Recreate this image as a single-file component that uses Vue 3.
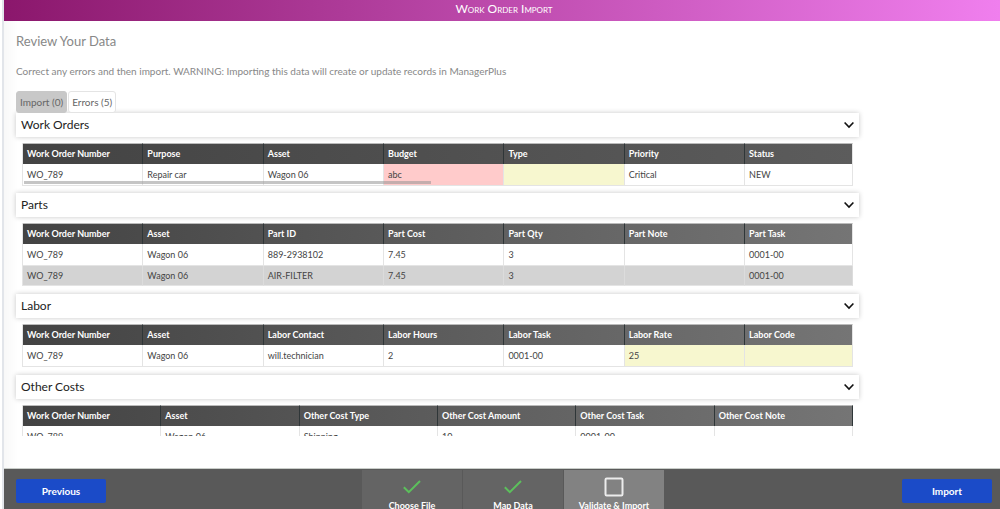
<script setup>
import { ref } from 'vue'

const activeTab = ref('import')

const sections = ref([
  {
    title: 'Work Orders',
    tone: 'dark',
    scrolls: true,
    open: true,
    columns: ['Work Order Number', 'Purpose', 'Asset', 'Budget', 'Type', 'Priority', 'Status'],
    rows: [['WO_789', 'Repair car', 'Wagon 06', 'abc', '', 'Critical', 'NEW']],
    flags: { '0-3': 'error', '0-4': 'warning' },
  },
  {
    title: 'Parts',
    tone: 'light',
    open: true,
    columns: ['Work Order Number', 'Asset', 'Part ID', 'Part Cost', 'Part Qty', 'Part Note', 'Part Task'],
    rows: [
      ['WO_789', 'Wagon 06', '889-2938102', '7.45', '3', '', '0001-00'],
      ['WO_789', 'Wagon 06', 'AIR-FILTER', '7.45', '3', '', '0001-00'],
    ],
    flags: {},
  },
  {
    title: 'Labor',
    tone: 'light',
    open: true,
    columns: ['Work Order Number', 'Asset', 'Labor Contact', 'Labor Hours', 'Labor Task', 'Labor Rate', 'Labor Code'],
    rows: [['WO_789', 'Wagon 06', 'will.technician', '2', '0001-00', '25', '']],
    flags: { '0-5': 'warning', '0-6': 'warning' },
  },
  {
    title: 'Other Costs',
    tone: 'light',
    open: true,
    columns: ['Work Order Number', 'Asset', 'Other Cost Type', 'Other Cost Amount', 'Other Cost Task', 'Other Cost Note'],
    rows: [['WO_789', 'Wagon 06', 'Shipping', '10', '0001-00', '']],
    flags: {},
  },
])

const steps = [
  { label: 'Choose File', done: true },
  { label: 'Map Data', done: true },
  { label: 'Validate & Import', done: false },
]
</script>

<template>
  <div class="shell">
    <header class="titlebar"><h1>Work Order Import</h1></header>

    <main class="content">
      <h2 class="heading">Review Your Data</h2>
      <p class="intro">Correct any errors and then import. WARNING: Importing this data will create or update records in ManagerPlus</p>

      <div class="review">
        <div class="tabs" role="tablist">
          <button type="button" role="tab" class="tab" :class="{ active: activeTab === 'import' }" :aria-selected="activeTab === 'import'" @click="activeTab = 'import'">Import (0)</button>
          <button type="button" role="tab" class="tab" :class="{ active: activeTab === 'errors' }" :aria-selected="activeTab === 'errors'" @click="activeTab = 'errors'">Errors (5)</button>
        </div>

        <section v-for="s in sections" :key="s.title" class="section">
          <button type="button" class="section-bar" :aria-expanded="s.open" @click="s.open = !s.open">
            <span>{{ s.title }}</span>
            <svg width="10" height="8" viewBox="0 0 10 8" aria-hidden="true"><path d="M.6 1.5 5 6.1 9.4 1.5" fill="none" stroke="#111" stroke-width="1.6" /></svg>
          </button>
          <div v-if="s.open" class="table-wrap">
            <table :class="[s.tone, { partial: s.columns.length === 7 }]">
              <thead>
                <tr><th v-for="c in s.columns" :key="c" scope="col">{{ c }}</th></tr>
              </thead>
              <tbody>
                <tr v-for="(r, i) in s.rows" :key="i">
                  <td v-for="(v, j) in r" :key="j" :class="s.flags[i + '-' + j]">{{ v }}</td>
                </tr>
              </tbody>
            </table>
            <div v-if="s.scrolls" class="thumb"></div>
          </div>
        </section>
      </div>
    </main>

    <footer class="footer">
      <button type="button" class="action">Previous</button>
      <ol class="steps">
        <li v-for="st in steps" :key="st.label" class="step" :class="{ current: !st.done }">
          <svg v-if="st.done" width="20" height="20" viewBox="0 0 20 20" aria-hidden="true"><path d="M1.8 10.2 6.8 15.2 18 4" fill="none" stroke="#5cc05c" stroke-width="2" /></svg>
          <svg v-else width="20" height="20" viewBox="0 0 20 20" aria-hidden="true"><rect x="1.5" y="1.5" width="17" height="17" rx="1.2" fill="none" stroke="#ececec" stroke-width="2" /></svg>
          <span>{{ st.label }}</span>
        </li>
      </ol>
      <button type="button" class="action">Import</button>
    </footer>
  </div>
</template>

<style>
html, body { margin: 0; overflow: hidden; background: #fff; }
</style>

<style scoped>
.shell {
  box-sizing: border-box;
  display: flex;
  flex-direction: column;
  height: 100vh;
  margin-left: 2px;
  border-left: 2px solid #e2e5ea;
  font-family: Lato, "Open Sans", sans-serif;
  color: #444;
  overflow: hidden;
}
button { font-family: inherit; cursor: pointer; }
.titlebar {
  flex: none;
  height: 21px;
  background: linear-gradient(90deg, #8b176c, #f07fee);
  text-align: center;
  padding-left: 4px;
}
.titlebar h1 {
  margin: 0;
  color: #fff;
  font-size: 12px;
  line-height: 17px;
  font-weight: 400;
  font-variant: small-caps;
}
.content {
  flex: 1;
  min-height: 0;
  display: flex;
  flex-direction: column;
  padding: 10px 12px 32px;
  background: linear-gradient(90deg, #f8f8f8, #fff 14px);
}
.heading { margin: 0; font-size: 13px; line-height: 20px; font-weight: 400; color: #888; }
.intro { margin: 12px 0 0; font-size: 10px; line-height: 16px; color: #888; }
.review {
  flex: 1;
  min-height: 0;
  margin: 8px 0 0 -6px;
  padding: 4px 129px 0 6px;
  overflow: hidden;
}
.tabs { display: flex; gap: 1px; }
.tab {
  height: 22px;
  padding: 0 3px;
  border: 1px solid #e4e4e4;
  border-radius: 3px;
  background: #fff;
  color: #666;
  font-size: 10px;
  line-height: 20px;
}
.tab.active { background: #c8c8c8; border-color: #c8c8c8; }
.section { margin-bottom: 8px; }
.section:first-of-type { margin-bottom: 7px; }
.section-bar {
  display: flex;
  align-items: center;
  justify-content: space-between;
  width: 100%;
  height: 24px;
  padding: 0 5px;
  border: 0;
  background: #fff;
  box-shadow: 0 0 5px rgba(0, 0, 0, 0.22);
  color: #222;
  font-size: 12px;
  line-height: 24px;
}
.table-wrap { position: relative; margin: 6px 6px 0; }
table {
  width: 100%;
  table-layout: fixed;
  border-collapse: separate;
  border-spacing: 0;
  border-left: 1px solid #e4e4e4;
  font-size: 9px;
  line-height: 12px;
}
.partial th:not(:last-child) { width: 14.5%; }
thead tr { background: linear-gradient(90deg, #434343, #757575); }
.dark thead tr { background: linear-gradient(90deg, #434343, #5c5c5c); }
th, td { box-sizing: border-box; padding: 0 4px; text-align: left; white-space: nowrap; }
th {
  height: 21px;
  border-top: 1px solid #bbb;
  border-right: 1px solid #2f3638;
  color: #fff;
  font-weight: 700;
}
.partial th:last-child { border-right-color: #e4e4e4; }
td { height: 22px; background: #fff; border: solid #e4e4e4; border-width: 0 1px 1px 0; }
tbody tr:nth-child(even) td { height: 20px; background: #d3d3d3; border-right-color: #dcdcdc; }
td.error { background: #ffcbcb; }
td.warning { background: #f7f7cf; }
.thumb {
  position: absolute;
  left: 2px;
  bottom: 2px;
  width: 49%;
  height: 3px;
  background: rgba(150, 150, 150, 0.55);
}
.footer {
  box-sizing: border-box;
  flex: none;
  display: flex;
  justify-content: space-between;
  align-items: flex-start;
  height: 41px;
  padding: 0 8px 0 12px;
  border-top: 1px solid #c9cdc9;
  background: #595959;
  overflow: hidden;
}
.action {
  width: 90px;
  height: 24px;
  margin-top: 10px;
  padding: 0;
  border: 0;
  border-radius: 2px;
  background: #1b4bc8;
  color: #fff;
  font-size: 10px;
  font-weight: 700;
  line-height: 24px;
}
.steps {
  display: flex;
  gap: 1px;
  margin: 0;
  padding: 1px 0 0 18px;
  list-style: none;
}
.step {
  display: flex;
  flex-direction: column;
  align-items: center;
  width: 100px;
  padding: 7px 0 10px;
  background: #646464;
  color: #fff;
  font-size: 9px;
  font-weight: 700;
  line-height: 12px;
  gap: 3px;
  white-space: nowrap;
}
.step.current { background: #828282; }
</style>
